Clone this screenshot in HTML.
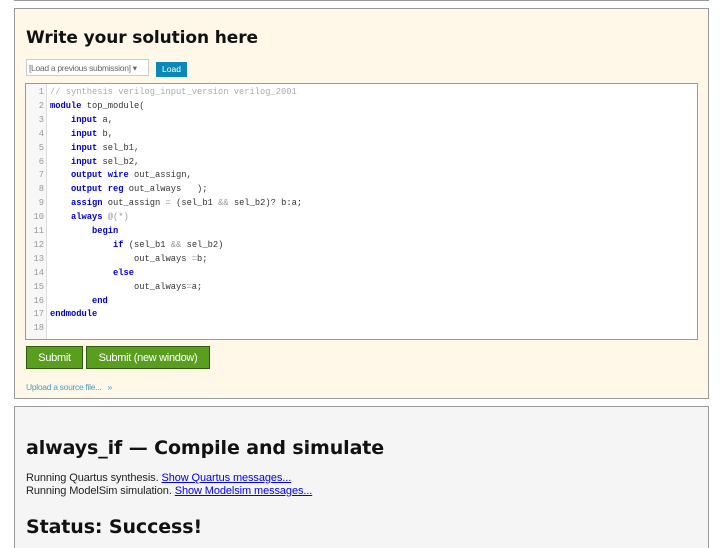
<!DOCTYPE html>
<html><head><style>
html,body{margin:0;width:726px;height:548px;overflow:hidden;background:#fff;font-family:"Liberation Sans",sans-serif;position:relative}
.topline{position:absolute;left:14px;top:0;width:695px;height:1px;background:#999}
.box1{position:absolute;left:14px;top:8px;width:693px;height:389px;border:1px solid #999;background:#fff7e8}
.box2{position:absolute;left:14px;top:406px;width:693px;height:160px;border:1px solid #999;background:#f5f5f5}
h2{margin:0;position:absolute;font-family:"DejaVu Sans",sans-serif;font-weight:bold;color:#111;font-size:19px;letter-spacing:-0.1px;white-space:nowrap}
.sel{position:absolute;left:11px;top:50px;width:123px;height:17px;border:1px solid #ccc;background:#fff;font-size:8.5px;color:#666;line-height:17px;padding-left:2px;box-sizing:border-box;letter-spacing:-0.3px}
.load{position:absolute;left:141px;top:53px;width:31px;height:15px;background:#0a88b8;color:#fff;font-size:8.5px;text-align:center;line-height:15px}
.code{position:absolute;left:10px;top:74px;width:671px;height:255px;border:1px solid #999;background:#fff;font-family:"Liberation Mono",monospace;font-size:8.75px}
.gut{position:absolute;left:0;top:0;width:20px;height:100%;background:#f7f7f7;border-right:1px solid #ddd}
.ln{position:absolute;left:0;width:18px;text-align:right;color:#999}
.tx{position:absolute;left:24px;white-space:pre;color:#333}
.k{color:#00c;font-weight:bold}.c{color:#aaa}.o{color:#999}
.btn{position:absolute;top:337px;height:23px;background:#5a9e20;border:1px solid #2e5a10;color:#fff;font-size:11px;line-height:23px;text-align:center;box-sizing:border-box;letter-spacing:-0.3px}
.up{position:absolute;left:11px;top:373px;font-size:8.5px;color:#4a9ec0;letter-spacing:-0.3px}
.p{position:absolute;left:11px;font-size:11px;color:#222;letter-spacing:-0.1px;white-space:nowrap}
.p a{color:#00e;text-decoration:underline}
</style></head><body>
<div class="topline"></div>
<div class="box1">
<h2 style="left:11px;top:19px;font-size:17px">Write your solution here</h2>
<div class="sel">[Load a previous submission] ▾</div>
<div class="load">Load</div>
<div class="code"><div class="gut"></div>
<div class="ln" style="top:3px">1</div><div class="tx" style="top:3px"><span class="c">// synthesis verilog_input_version verilog_2001</span></div>
<div class="ln" style="top:16.9px">2</div><div class="tx" style="top:16.9px"><span class="k">module</span> top_module(</div>
<div class="ln" style="top:30.8px">3</div><div class="tx" style="top:30.8px">    <span class="k">input</span> a,</div>
<div class="ln" style="top:44.7px">4</div><div class="tx" style="top:44.7px">    <span class="k">input</span> b,</div>
<div class="ln" style="top:58.6px">5</div><div class="tx" style="top:58.6px">    <span class="k">input</span> sel_b1,</div>
<div class="ln" style="top:72.5px">6</div><div class="tx" style="top:72.5px">    <span class="k">input</span> sel_b2,</div>
<div class="ln" style="top:86.4px">7</div><div class="tx" style="top:86.4px">    <span class="k">output wire</span> out_assign,</div>
<div class="ln" style="top:100.3px">8</div><div class="tx" style="top:100.3px">    <span class="k">output reg</span> out_always   );</div>
<div class="ln" style="top:114.2px">9</div><div class="tx" style="top:114.2px">    <span class="k">assign</span> out_assign <span class="o">=</span> (sel_b1 <span class="o">&amp;&amp;</span> sel_b2)? b:a;</div>
<div class="ln" style="top:128.1px">10</div><div class="tx" style="top:128.1px">    <span class="k">always</span> <span class="o">@(*)</span></div>
<div class="ln" style="top:142px">11</div><div class="tx" style="top:142px">        <span class="k">begin</span></div>
<div class="ln" style="top:155.9px">12</div><div class="tx" style="top:155.9px">            <span class="k">if</span> (sel_b1 <span class="o">&amp;&amp;</span> sel_b2)</div>
<div class="ln" style="top:169.8px">13</div><div class="tx" style="top:169.8px">                out_always <span class="o">=</span>b;</div>
<div class="ln" style="top:183.7px">14</div><div class="tx" style="top:183.7px">            <span class="k">else</span></div>
<div class="ln" style="top:197.6px">15</div><div class="tx" style="top:197.6px">                out_always<span class="o">=</span>a;</div>
<div class="ln" style="top:211.5px">16</div><div class="tx" style="top:211.5px">        <span class="k">end</span></div>
<div class="ln" style="top:225.4px">17</div><div class="tx" style="top:225.4px"><span class="k">endmodule</span></div>
<div class="ln" style="top:239.3px">18</div>
</div>
<div class="btn" style="left:11px;width:57px">Submit</div>
<div class="btn" style="left:71px;width:124px">Submit (new window)</div>
<div class="up">Upload a source file... &nbsp;&nbsp;»</div>
</div>
<div class="box2">
<h2 style="left:11px;top:30px">always_if — Compile and simulate</h2>
<div class="p" style="top:65px">Running Quartus synthesis. <a>Show Quartus messages...</a></div>
<div class="p" style="top:78px">Running ModelSim simulation. <a>Show Modelsim messages...</a></div>
<h2 style="left:11px;top:109px">Status: Success!</h2>
</div>
</body></html>
